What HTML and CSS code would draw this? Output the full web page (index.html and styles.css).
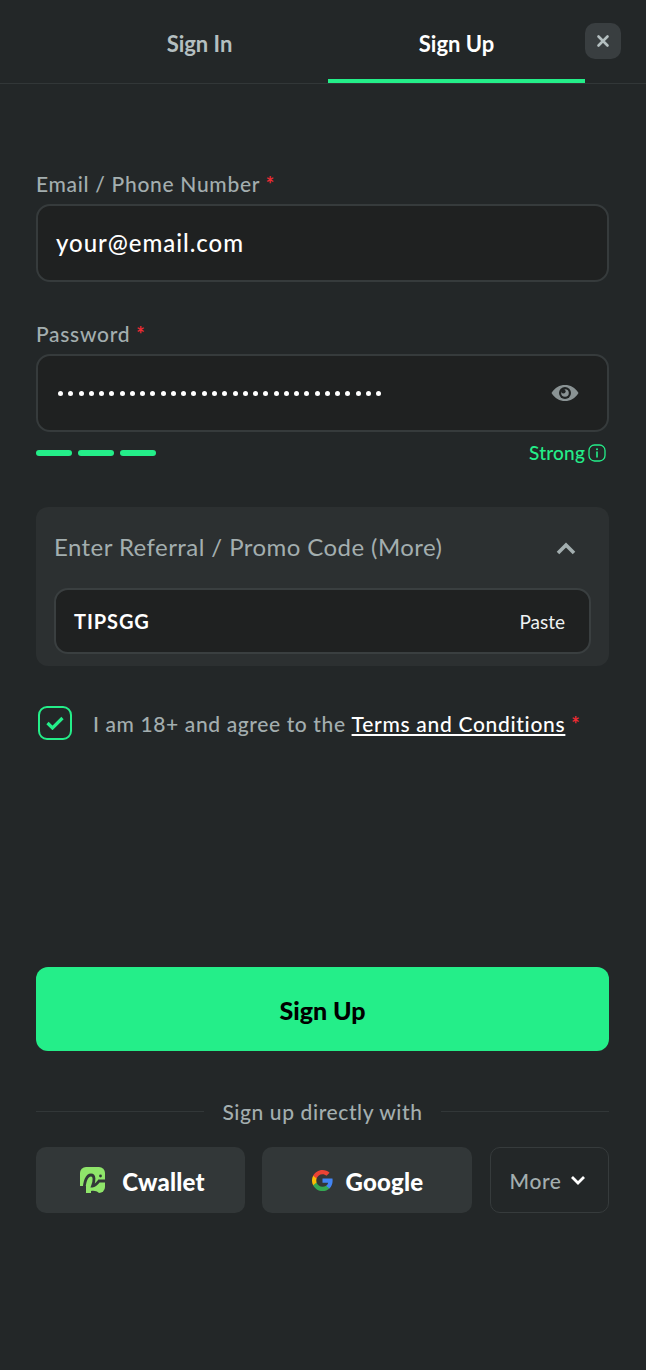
FILE: index.html
```html
<!DOCTYPE html>
<html lang="en">
<head>
<meta charset="utf-8">
<title>Sign Up</title>
<link rel="stylesheet" href="styles.css">
</head>
<body>
<div class="modal">
  <header class="tabs">
    <div class="tab">Sign In</div>
    <div class="tab tab-active">Sign Up</div>
    <button class="close" type="button" aria-label="Close">
      <svg width="14" height="14" viewBox="0 0 14 14"><path d="M2.500 2.500l9 9M11.500 2.500l-9 9" stroke="#b4bfc0" stroke-width="2.600" stroke-linecap="round" fill="none"/></svg>
    </button>
  </header>
  <form class="form">
    <div class="field">
      <div class="label">Email / Phone Number <span class="req">*</span></div>
      <div class="input"><span class="value">your@email.com</span></div>
    </div>
    <div class="field field-pass">
      <div class="label">Password <span class="req">*</span></div>
      <div class="input">
        <span class="dots"><i></i><i></i><i></i><i></i><i></i><i></i><i></i><i></i><i></i><i></i><i></i><i></i><i></i><i></i><i></i><i></i><i></i><i></i><i></i><i></i><i></i><i></i><i></i><i></i><i></i><i></i><i></i><i></i><i></i><i></i><i></i><i></i></span>
        <svg class="eye" width="28" height="18" viewBox="0 0 28 18"><path d="M.5 9C4 3.500 8.500 1 14 1s10 2.500 13.500 8C24 14.500 19.500 17 14 17S4 14.500.5 9z" fill="#8a9394"/><circle cx="14" cy="9" r="6" fill="#202323"/><circle cx="14" cy="9" r="3.800" fill="#8a9394"/><circle cx="12.400" cy="7.200" r="2.200" fill="#202323"/></svg>
      </div>
      <div class="strength">
        <div class="bars"><i></i><i></i><i></i></div>
        <div class="strong">Strong
          <svg width="18" height="18" viewBox="0 0 18 18"><rect x="1" y="1" width="16" height="16" rx="5.500" fill="none" stroke="#24ee89" stroke-width="1.300"/><path d="M9 8v5" stroke="#24ee89" stroke-width="1.600" stroke-linecap="round"/><circle cx="9" cy="5.300" r="1" fill="#24ee89"/></svg>
        </div>
      </div>
    </div>
    <section class="promo">
      <div class="promo-head">
        <span>Enter Referral / Promo Code (More)</span>
        <svg width="22" height="14" viewBox="0 0 22 14"><path d="M3 12l8-8 8 8" fill="none" stroke="#a3aeaf" stroke-width="3.600"/></svg>
      </div>
      <div class="promo-input"><span class="code">TIPSGG</span><span class="paste">Paste</span></div>
    </section>
    <div class="agree">
      <span class="check">
        <svg width="18" height="14" viewBox="0 0 18 14"><path d="M1.500 7l5 5 10-10" fill="none" stroke="#24ee89" stroke-width="3.200"/></svg>
      </span>
      <span class="agree-text">I am 18+ and agree to the <a class="terms">Terms and Conditions</a> <span class="req">*</span></span>
    </div>
    <button class="submit" type="button">Sign Up</button>
    <div class="divider"><span>Sign up directly with</span></div>
    <div class="socials">
      <div class="social social-c">
        <svg width="26" height="26" viewBox="0 0 26 26"><rect x="1" y="0" width="25" height="26" rx="6" fill="#8fe56a"/><path d="M0 19h7v8H0z" fill="#323738"/><path d="M5 25C5 14 8 8 12 8c4 0 3.500 6 1.500 11 3 0 5-3 6.500-5h6" fill="none" stroke="#323738" stroke-width="2.800"/><circle cx="21.500" cy="9" r="1.400" fill="#323738"/><path d="M20 26c-2-2-5-2.500-8-2v3h8z" fill="#323738"/></svg>
        <span>Cwallet</span>
      </div>
      <div class="social social-g">
        <svg width="23" height="23" viewBox="0 0 48 48"><path fill="#4285F4" d="M45.100 24.500c0-1.600-.100-3.100-.400-4.500H24v8.500h11.800c-.500 2.700-2 5-4.400 6.600v5.500h7.100c4.200-3.800 6.600-9.500 6.600-16.100z"/><path fill="#34A853" d="M24 46c5.900 0 10.900-2 14.500-5.400l-7.100-5.500c-2 1.300-4.500 2.100-7.400 2.100-5.700 0-10.600-3.900-12.300-9.100H4.400v5.700C8 40.900 15.400 46 24 46z"/><path fill="#FBBC05" d="M11.700 28.100c-.400-1.300-.700-2.700-.700-4.100s.300-2.800.700-4.100v-5.700H4.400C2.900 17.100 2 20.500 2 24s.900 6.900 2.400 9.800l7.300-5.700z"/><path fill="#EA4335" d="M24 10.800c3.200 0 6.100 1.100 8.400 3.300l6.300-6.300C34.900 4.200 29.900 2 24 2 15.400 2 8 7.100 4.400 14.200l7.300 5.700c1.700-5.200 6.600-9.100 12.300-9.100z"/></svg>
        <span>Google</span>
      </div>
      <div class="more">
        <span>More</span>
        <svg width="16" height="12" viewBox="0 0 16 12"><path d="M2 3l6 6 6-6" fill="none" stroke="#fff" stroke-width="2.800"/></svg>
      </div>
    </div>
  </form>
</div>
</body>
</html>
```
FILE: styles.css
```css
* { box-sizing: border-box; }
html, body { margin: 0; padding: 0; }
body {
  width: 646px;
  height: 1370px;
  overflow: hidden;
  background: #232728;
  font-family: "Lato", "Noto Sans", sans-serif;
  color: #fff;
}
.modal { height: 1370px; }
.tabs {
  position: relative;
  display: flex;
  height: 84px;
  padding-left: 71px;
  padding-right: 61px;
  border-bottom: 1px solid #323738;
}
.tab {
  flex: 1;
  display: flex;
  align-items: center;
  justify-content: center;
  height: 83px;
  padding-top: 4px;
  font-size: 22px;
  font-weight: 700;
  color: #b4bfc0;
}
.tab-active { color: #fff; border-bottom: 4px solid #24ee89; padding-top: 8px; }
.close {
  position: absolute;
  top: 23px;
  left: 585px;
  width: 36px;
  height: 36px;
  padding: 0;
  display: flex;
  align-items: center;
  justify-content: center;
  background: #393e40;
  border: 0;
  border-radius: 10px;
}
.form { padding: 0 37px 0 36px; }
.field { padding-top: 86px; }
.field-pass { padding-top: 38px; }
.label {
  height: 34px;
  font-size: 21px;
  line-height: 27px;
  color: #a3aeaf;
  letter-spacing: .7px;
  font-weight: 500;
}
.req { color: #ee2b33; font-size: 20px; font-weight: 700; }
.input {
  display: flex;
  align-items: center;
  justify-content: space-between;
  height: 78px;
  padding: 0 28px 0 18px;
  background: #1f2121;
  border: 2px solid #363b3c;
  border-radius: 14px;
}
.value { font-size: 24px; letter-spacing: .95px; font-weight: 500; color: #fff; line-height: 1; padding-bottom: 1px; }
.dots { display: flex; gap: 5.270px; padding: 1px 0 0 2px; }
.dots i { width: 5px; height: 5px; border-radius: 50%; background: #fff; }
.strength {
  display: flex;
  align-items: center;
  justify-content: space-between;
  height: 42px;
  padding-right: 3px;
}
.bars { display: flex; gap: 6px; }
.bars i { width: 36px; height: 6px; border-radius: 3px; background: #24ee89; }
.strong {
  display: flex;
  align-items: center;
  gap: 3px;
  height: 20px;
  margin-top: -1px;
  font-size: 19px;
  letter-spacing: .2px;
  font-weight: 500;
  color: #24ee89;
}
.promo {
  margin-top: 33px;
  height: 159px;
  padding: 0 18px;
  background: #2c3031;
  border-radius: 12px;
}
.promo-head {
  display: flex;
  align-items: center;
  justify-content: space-between;
  height: 81px;
  padding-right: 14px;
  font-size: 24px;
  color: #a3aeaf;
  letter-spacing: .43px;
  line-height: 1;
}
.promo-head span { padding-bottom: 1px; }
.promo-input {
  display: flex;
  align-items: center;
  justify-content: space-between;
  height: 66px;
  padding: 0 24px 0 18px;
  background: #1f2121;
  border: 2px solid #3a3f40;
  border-radius: 14px;
}
.code { font-size: 20px; font-weight: 700; letter-spacing: .9px; }
.paste { font-size: 19px; color: #eef2f2; }
.agree {
  display: flex;
  align-items: center;
  margin-top: 40px;
  padding-left: 2px;
  height: 34px;
  gap: 21px;
}
.check {
  display: flex;
  align-items: center;
  justify-content: center;
  width: 34px;
  height: 34px;
  border: 2.500px solid #24ee89;
  border-radius: 9px;
}
.agree-text { font-size: 21px; color: #a3aeaf; letter-spacing: .62px; font-weight: 500; }
.terms { color: #fff; font-weight: 500; text-decoration: underline; letter-spacing: .7px; }
.submit {
  display: block;
  width: 100%;
  height: 84px;
  margin-top: 227px;
  border: 0;
  border-radius: 12px;
  padding: 2px 0 0;
  background: #24ee89;
  color: #000;
  font-family: inherit;
  font-size: 25px;
  font-weight: 900;
}
.divider {
  display: flex;
  align-items: center;
  gap: 18px;
  margin-top: 46px;
  height: 28px;
  font-size: 21px;
  letter-spacing: .6px;
  color: #a3aeaf;
  font-weight: 500;
}
.divider::before, .divider::after {
  content: "";
  flex: 1;
  height: 1px;
  background: #323738;
}
.socials {
  display: flex;
  margin-top: 22px;
  height: 66px;
}
.social {
  display: flex;
  align-items: center;
  justify-content: center;
  background: #323738;
  border-radius: 10px;
  font-size: 24px;
  font-weight: 900;
  color: #fff;
  padding-top: 2px;
}
.social svg { margin-top: -2px; }
.social-c { gap: 17px; width: 209px; letter-spacing: .2px; padding-left: 3px; }
.social-g { gap: 12px; width: 210px; margin-left: 17px; margin-right: 18px; letter-spacing: .2px; }
.more {
  display: flex;
  align-items: center;
  justify-content: center;
  gap: 9px;
  width: 119px;
  padding-right: 3px;
  border: 1px solid #363b3c;
  border-radius: 10px;
  font-size: 21px;
  color: #a3aeaf;
  letter-spacing: .55px;
  font-weight: 500;
}
```
